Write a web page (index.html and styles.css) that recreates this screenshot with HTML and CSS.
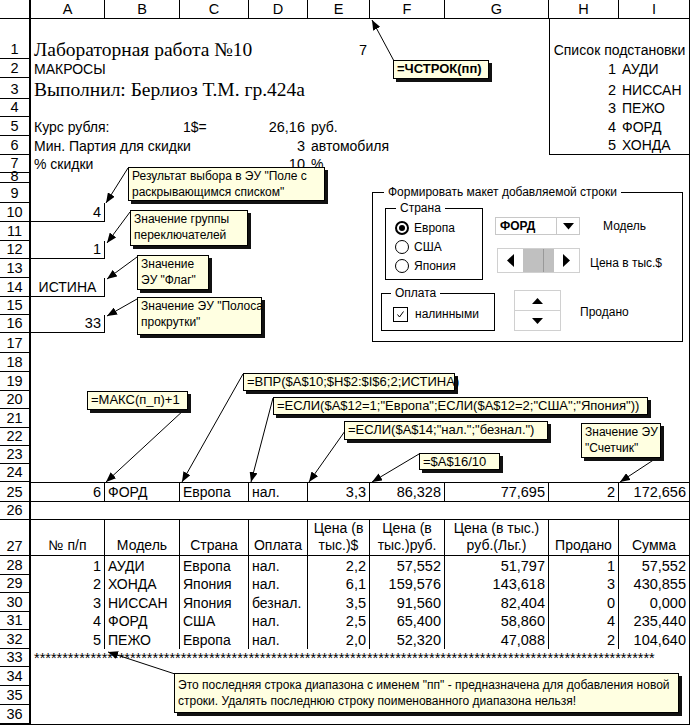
FILE: index.html
```html
<!DOCTYPE html>
<html lang="ru">
<head>
<meta charset="utf-8">
<title>Лабораторная работа №10 — МАКРОСЫ</title>
<link rel="stylesheet" href="styles.css">
</head>
<body>
<div class="sheet">
  <div class="row hdr h19">
    <div class="rn"></div>
    <div class="ch">A</div><div class="ch">B</div><div class="ch">C</div><div class="ch">D</div><div class="ch">E</div><div class="ch">F</div><div class="ch">G</div><div class="ch">H</div><div class="ch">I</div>
  </div>
  <div class="row h40">
    <div class="rn">1</div>
    <div class="c ka serif">Лабораторная работа №10</div>
    <div class="c ke num">7</div>
    <div class="c khi ctr bl">Список подстановки</div>
  </div>
  <div class="row h19">
    <div class="rn">2</div>
    <div class="c ka">МАКРОСЫ</div>
    <div class="c kh num bl">1</div><div class="c ki">АУДИ</div>
  </div>
  <div class="row h21">
    <div class="rn">3</div>
    <div class="c ka serif">Выполнил: Берлиоз Т.М. гр.424а</div>
    <div class="c kh num bl">2</div><div class="c ki">НИССАН</div>
  </div>
  <div class="row h18">
    <div class="rn">4</div>
    <div class="c kh num bl">3</div><div class="c ki">ПЕЖО</div>
  </div>
  <div class="row h19">
    <div class="rn">5</div>
    <div class="c ka">Курс рубля:</div>
    <div class="c kc">1$=</div>
    <div class="c kd num">26,16</div>
    <div class="c ke">руб.</div>
    <div class="c kh num bl">4</div><div class="c ki">ФОРД</div>
  </div>
  <div class="row h19">
    <div class="rn">6</div>
    <div class="c ka">Мин. Партия для скидки</div>
    <div class="c kd num">3</div>
    <div class="c ke">автомобиля</div>
    <div class="c kh num bl bb">5</div><div class="c ki bb">ХОНДА</div>
  </div>
  <div class="row h16">
    <div class="rn">7</div>
    <div class="c ka">% скидки</div>
    <div class="c kd num">10</div>
    <div class="c ke">%</div>
  </div>
  <div class="row h12"><div class="rn tight">8</div></div>
  <div class="row h20"><div class="rn">9</div></div>
  <div class="row h19"><div class="rn">10</div><div class="c ka num br bb">4</div></div>
  <div class="row h19"><div class="rn">11</div></div>
  <div class="row h18"><div class="rn">12</div><div class="c ka num br bb">1</div></div>
  <div class="row h19"><div class="rn">13</div></div>
  <div class="row h19"><div class="rn">14</div><div class="c ka ctr br bb">ИСТИНА</div></div>
  <div class="row h18"><div class="rn">15</div></div>
  <div class="row h18"><div class="rn">16</div><div class="c ka num br bb">33</div></div>
  <div class="row h20"><div class="rn">17</div></div>
  <div class="row h19"><div class="rn">18</div></div>
  <div class="row h19"><div class="rn">19</div></div>
  <div class="row h18"><div class="rn">20</div></div>
  <div class="row h19"><div class="rn">21</div></div>
  <div class="row h18"><div class="rn">22</div></div>
  <div class="row h18"><div class="rn">23</div></div>
  <div class="row h18"><div class="rn">24</div></div>
  <div class="row h20 boxed">
    <div class="rn">25</div>
    <div class="c ka num br">6</div>
    <div class="c kb br">ФОРД</div>
    <div class="c kc br">Европа</div>
    <div class="c kd br">нал.</div>
    <div class="c ke num br">3,3</div>
    <div class="c kf num br">86,328</div>
    <div class="c kg num br">77,695</div>
    <div class="c kh num br">2</div>
    <div class="c ki num">172,656</div>
  </div>
  <div class="row h18"><div class="rn">26</div><div class="c kall bb"></div></div>
  <div class="row h36 thead">
    <div class="rn">27</div>
    <div class="c ka ctr br bb">№ п/п</div>
    <div class="c kb ctr br bb">Модель</div>
    <div class="c kc ctr br bb">Страна</div>
    <div class="c kd ctr br bb">Оплата</div>
    <div class="c ke ctr br bb"><span>Цена (в<br>тыс.)$</span></div>
    <div class="c kf ctr br bb"><span>Цена (в<br>тыс.)руб.</span></div>
    <div class="c kg ctr br bb"><span>Цена (в тыс.)<br>руб.(Льг.)</span></div>
    <div class="c kh ctr br bb">Продано</div>
    <div class="c ki ctr bb">Сумма</div>
  </div>
  <div class="row h19">
    <div class="rn">28</div>
    <div class="c ka num br">1</div><div class="c kb br">АУДИ</div><div class="c kc br">Европа</div><div class="c kd br">нал.</div>
    <div class="c ke num br">2,2</div><div class="c kf num br">57,552</div><div class="c kg num br">51,797</div><div class="c kh num br">1</div><div class="c ki num">57,552</div>
  </div>
  <div class="row h18">
    <div class="rn">29</div>
    <div class="c ka num br">2</div><div class="c kb br">ХОНДА</div><div class="c kc br">Япония</div><div class="c kd br">нал.</div>
    <div class="c ke num br">6,1</div><div class="c kf num br">159,576</div><div class="c kg num br">143,618</div><div class="c kh num br">3</div><div class="c ki num">430,855</div>
  </div>
  <div class="row h19">
    <div class="rn">30</div>
    <div class="c ka num br">3</div><div class="c kb br">НИССАН</div><div class="c kc br">Япония</div><div class="c kd br">безнал.</div>
    <div class="c ke num br">3,5</div><div class="c kf num br">91,560</div><div class="c kg num br">82,404</div><div class="c kh num br">0</div><div class="c ki num">0,000</div>
  </div>
  <div class="row h18">
    <div class="rn">31</div>
    <div class="c ka num br">4</div><div class="c kb br">ФОРД</div><div class="c kc br">США</div><div class="c kd br">нал.</div>
    <div class="c ke num br">2,5</div><div class="c kf num br">65,400</div><div class="c kg num br">58,860</div><div class="c kh num br">4</div><div class="c ki num">235,440</div>
  </div>
  <div class="row h19">
    <div class="rn">32</div>
    <div class="c ka num br">5</div><div class="c kb br">ПЕЖО</div><div class="c kc br">Европа</div><div class="c kd br">нал.</div>
    <div class="c ke num br">2,0</div><div class="c kf num br">52,320</div><div class="c kg num br">47,088</div><div class="c kh num br">2</div><div class="c ki num">104,640</div>
  </div>
  <div class="row h18"><div class="rn">33</div><div class="c ka stars">**************************************************************************************************************</div></div>
  <div class="row h19"><div class="rn">34</div></div>
  <div class="row h19"><div class="rn">35</div></div>
  <div class="row h19"><div class="rn">36</div></div>

  <svg class="arrows" width="690" height="725" viewBox="0 0 690 725">
    <defs>
      <marker id="ah" viewBox="0 0 10 8" refX="10" refY="4" markerWidth="10" markerHeight="8" markerUnits="userSpaceOnUse" orient="auto">
        <path d="M0 0L10 4L0 8z" fill="#000"/>
      </marker>
    </defs>
    <g stroke="#000" stroke-width="1" fill="none">
      <line x1="394" y1="61" x2="372" y2="20" marker-end="url(#ah)"/>
      <line x1="128" y1="168" x2="106" y2="203" marker-end="url(#ah)"/>
      <line x1="130" y1="212" x2="107" y2="243" marker-end="url(#ah)"/>
      <line x1="137" y1="257" x2="107" y2="279" marker-end="url(#ah)"/>
      <line x1="137" y1="299" x2="107" y2="316" marker-end="url(#ah)"/>
      <line x1="185" y1="409" x2="106" y2="482" marker-end="url(#ah)"/>
      <line x1="243" y1="374" x2="182" y2="482" marker-end="url(#ah)"/>
      <line x1="273" y1="398" x2="251" y2="482" marker-end="url(#ah)"/>
      <line x1="345" y1="431" x2="309" y2="482" marker-end="url(#ah)"/>
      <line x1="419" y1="454" x2="372" y2="482" marker-end="url(#ah)"/>
      <line x1="658" y1="457" x2="620" y2="482" marker-end="url(#ah)"/>
      <line x1="175" y1="674" x2="108" y2="652" marker-end="url(#ah)"/>
    </g>
  </svg>

  <div class="note bold n-rows">=ЧСТРОК(пп)</div>
  <div class="note n-combo">Результат выбора в ЭУ "Поле с<br>раскрывающимся списком"</div>
  <div class="note n-opt">Значение группы<br>переключателей</div>
  <div class="note n-flag">Значение<br>ЭУ "Флаг"</div>
  <div class="note n-scroll">Значение ЭУ "Полоса<br>прокрутки"</div>
  <div class="note formula n-max">=МАКС(п_п)+1</div>
  <div class="note formula n-vpr">=ВПР($A$10;$H$2:$I$6;2;ИСТИНА)</div>
  <div class="note formula n-if1">=ЕСЛИ($A$12=1;"Европа";ЕСЛИ($A$12=2;"США";"Япония"))</div>
  <div class="note formula n-if2">=ЕСЛИ($A$14;"нал.";"безнал.")</div>
  <div class="note formula n-div">=$A$16/10</div>
  <div class="note n-cnt">Значение ЭУ<br>"Счетчик"</div>
  <div class="note n-last">Это последняя строка диапазона с именем "пп" - предназначена для добавления новой<br>строки. Удалять последнюю строку поименованного диапазона нельзя!</div>

  <div class="form">
    <span class="legend">Формировать макет добавляемой строки</span>
    <div class="frame fr-country">
      <span class="legend">Страна</span>
      <div class="opts">
        <div class="opt"><span class="radio on"></span>Европа</div>
        <div class="opt"><span class="radio"></span>США</div>
        <div class="opt"><span class="radio"></span>Япония</div>
      </div>
    </div>
    <div class="frame fr-pay">
      <span class="legend">Оплата</span>
      <div class="chk-row">
        <span class="chk"><svg width="13" height="13" viewBox="0 0 13 13"><path d="M3.5 6.5L5.5 9L9.5 3.5" fill="none" stroke="#000" stroke-width="1"/></svg></span>
        налинными
      </div>
    </div>
    <div class="dd">
      <span class="dd-val">ФОРД</span>
      <span class="dd-btn"><svg width="11" height="7" viewBox="0 0 11 7"><path d="M0 0H11L5.5 6.5Z" fill="#000"/></svg></span>
    </div>
    <span class="lbl lbl-model">Модель</span>
    <div class="sb">
      <span class="sb-btn"><svg width="7" height="13" viewBox="0 0 7 13"><path d="M7 0V13L0 6.5Z" fill="#000"/></svg></span>
      <span class="sb-track"><span class="sb-a"></span><span class="sb-b"></span></span>
      <span class="sb-btn"><svg width="7" height="13" viewBox="0 0 7 13"><path d="M0 0V13L7 6.5Z" fill="#000"/></svg></span>
    </div>
    <span class="lbl lbl-price">Цена в тыс.$</span>
    <div class="sp">
      <span class="sp-btn"><svg width="11" height="6" viewBox="0 0 11 6"><path d="M0 6H11L5.5 0Z" fill="#000"/></svg></span>
      <span class="sp-btn"><svg width="11" height="6" viewBox="0 0 11 6"><path d="M0 0H11L5.5 6Z" fill="#000"/></svg></span>
    </div>
    <span class="lbl lbl-sold">Продано</span>
  </div>
</div>
</body>
</html>
```

FILE: styles.css
```css
* { box-sizing: border-box; }
html, body { margin: 0; padding: 0; background: #fff; }
body { width: 690px; }

.sheet {
  position: relative;
  width: 690px;
  border-right: 1px solid #000;
  border-bottom: 1px solid #000;
  font-family: "Liberation Sans", Arial, sans-serif;
  font-size: 14px;
  color: #000;
  overflow: hidden;
}

.row {
  display: grid;
  grid-template-columns: 31px 74px 75px 69px 59px 62px 75px 104px 70px 70px;
}
.row > * { grid-row: 1; }

.h12 { height: 12px; }
.h16 { height: 16px; }
.h18 { height: 18px; }
.h19 { height: 19px; }
.h20 { height: 20px; }
.h21 { height: 21px; }
.h36 { height: 36px; }
.h40 { height: 40px; }

.rn {
  grid-column: 1;
  display: flex;
  align-items: flex-end;
  justify-content: center;
  border-right: 2px solid #000;
  border-bottom: 1px solid #000;
  font-size: 14.5px;
  line-height: 16px;
  padding-bottom: 1px;
  white-space: nowrap;
}
.rn.tight { line-height: 11px; padding-bottom: 0; }
.hdr .rn { align-items: center; padding: 0; }
.ch {
  display: flex;
  align-items: center;
  justify-content: center;
  border-right: 1px solid #000;
  border-bottom: 1px solid #000;
  font-size: 14.5px;
}
.ch:last-child { border-right: 0; }

.c {
  display: flex;
  align-items: flex-end;
  padding: 0 3px 1px;
  white-space: nowrap;
  line-height: 16px;
  min-width: 0;
}
.num { justify-content: flex-end; font-size: 14.5px; }
.ctr { justify-content: center; text-align: center; }
.serif {
  font-family: "Liberation Serif", "Times New Roman", serif;
  font-size: 19.5px;
  line-height: 19px;
  padding-bottom: 0;
}
.stars { font-size: 14.5px; }

.ka { grid-column: 2; }
.kb { grid-column: 3; }
.kc { grid-column: 4; }
.kd { grid-column: 5; }
.ke { grid-column: 6; }
.kf { grid-column: 7; }
.kg { grid-column: 8; }
.kh { grid-column: 9; }
.ki { grid-column: 10; }
.khi { grid-column: 9 / span 2; }
.kall { grid-column: 2 / span 9; }

.bb { border-bottom: 1px solid #000; }
.br { border-right: 1px solid #000; }
.bl { border-left: 1px solid #000; }
.boxed .c { border-top: 1px solid #000; border-bottom: 1px solid #000; }
.thead .c { line-height: 17px; }

/* arrows of the callouts */
.arrows {
  position: absolute;
  left: 0;
  top: 0;
  pointer-events: none;
}

/* callouts */
.note {
  position: absolute;
  background: #ffffe1;
  border: 1px solid #000;
  box-shadow: 3px 3px 0 #111;
  font-size: 12px;
  line-height: 16px;
  padding: 0 3px;
  white-space: nowrap;
}
.note.formula { font-size: 13px; }
.note.bold { font-weight: bold; font-size: 13px; }
.n-rows   { left: 393px; top: 60px;  width: 96px;  height: 19px; }
.n-combo  { left: 128px; top: 167px; width: 197px; height: 34px; }
.n-opt    { left: 130px; top: 210px; width: 118px; height: 36px; }
.n-flag   { left: 137px; top: 255px; width: 72px;  height: 35px; }
.n-scroll { left: 137px; top: 297px; width: 125px; height: 38px; }
.n-max    { left: 87px;  top: 391px; width: 101px; height: 19px; }
.n-vpr    { left: 243px; top: 373px; width: 212px; height: 18px; font-size: 12.5px; }
.n-if1    { left: 273px; top: 397px; width: 375px; height: 18px; }
.n-if2    { left: 344px; top: 421px; width: 204px; height: 19px; }
.n-div    { left: 419px; top: 453px; width: 81px;  height: 17px; }
.n-cnt    { left: 581px; top: 423px; width: 80px;  height: 35px; }
.n-last   { left: 174px; top: 673px; width: 505px; height: 40px; padding-top: 3px; }

/* form controls group */
.form {
  position: absolute;
  left: 372px;
  top: 192px;
  width: 311px;
  height: 150px;
  border: 1px solid #000;
  font-size: 12px;
  line-height: 16px;
}
.legend {
  position: absolute;
  top: -9px;
  left: 11px;
  padding: 0 4px;
  background: #fff;
  white-space: nowrap;
}
.frame {
  position: absolute;
  border: 1px solid #000;
}
.fr-country { left: 12px; top: 15px; width: 98px; height: 72px; }
.fr-country .legend { left: 10px; }
.fr-pay { left: 8px; top: 100px; width: 114px; height: 38px; }
.fr-pay .legend { left: 9px; }

.opts {
  display: flex;
  flex-direction: column;
  padding: 9px 0 0 9px;
}
.opt {
  display: flex;
  align-items: center;
  gap: 5px;
  height: 19px;
}
.radio {
  width: 14px;
  height: 14px;
  border: 1px solid #000;
  border-radius: 50%;
  display: flex;
  align-items: center;
  justify-content: center;
  background: #fff;
}
.radio.on { border-width: 2px; }
.radio.on::after {
  content: "";
  width: 6px;
  height: 6px;
  border-radius: 50%;
  background: #000;
}

.chk-row {
  display: flex;
  align-items: center;
  gap: 7px;
  padding: 12px 0 0 11px;
}
.chk {
  width: 15px;
  height: 15px;
  border: 1px solid #000;
  display: flex;
  align-items: center;
  justify-content: center;
}

.dd {
  position: absolute;
  left: 122px;
  top: 24px;
  width: 85px;
  height: 18px;
  border: 1px solid #c8c8c8;
  display: flex;
  align-items: center;
}
.dd-val { flex: 1; padding-left: 4px; font-weight: bold; }
.dd-btn {
  width: 23px;
  height: 100%;
  border-left: 1px solid #c8c8c8;
  display: flex;
  align-items: center;
  justify-content: center;
}

.sb {
  position: absolute;
  left: 124px;
  top: 55px;
  width: 83px;
  height: 25px;
  border: 1px solid #d0d0d0;
  display: flex;
}
.sb-btn {
  width: 25px;
  display: flex;
  align-items: center;
  justify-content: center;
}
.sb-track { flex: 1; display: flex; background: #c0c0c0; }
.sb-a { width: 21px; border-right: 1px solid #999; }
.sb-b { flex: 1; }

.sp {
  position: absolute;
  left: 141px;
  top: 97px;
  width: 47px;
  height: 41px;
  border: 1px solid #d0d0d0;
  display: flex;
  flex-direction: column;
}
.sp-btn {
  flex: 1;
  display: flex;
  align-items: center;
  justify-content: center;
}
.sp-btn + .sp-btn { border-top: 1px solid #d0d0d0; }

.lbl { position: absolute; white-space: nowrap; }
.lbl-model { left: 230px; top: 25px; }
.lbl-price { left: 217px; top: 62px; }
.lbl-sold  { left: 207px; top: 111px; }
```
